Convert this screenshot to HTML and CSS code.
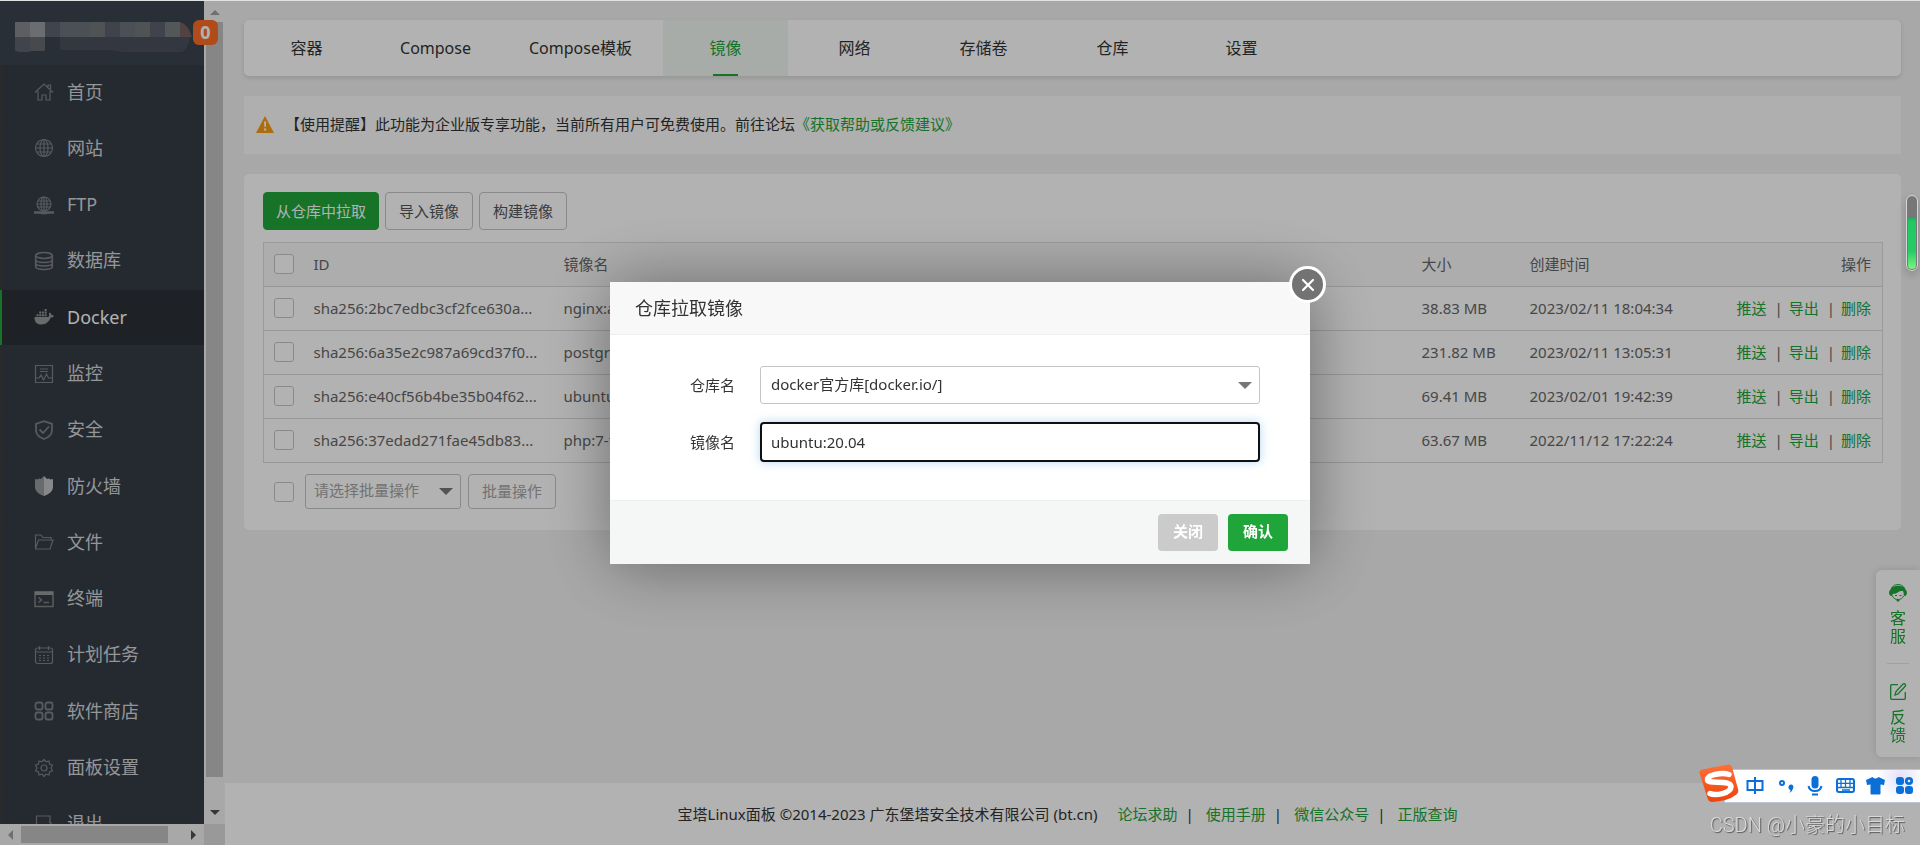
FILE: index.html
```html
<!DOCTYPE html>
<html lang="zh-CN">
<head>
<meta charset="utf-8">
<title>宝塔Linux面板</title>
<link rel="stylesheet" href="styles.css">
</head>
<body>
<div class="app">
  <aside class="side">
    <div class="side-head">
      <svg class="mosaic" width="180" height="30" viewBox="0 0 180 30" aria-hidden="true">
        <path fill="#84878c" d="M0 0h15v15H0z"/><path fill="#9a9da2" d="M15 0h15v15H15z"/>
        <path fill="#5c626d" d="M0 15h15v15H8q-8 0-8-2zM30 0h15v15H30z"/>
        <path fill="#66696f" d="M15 15h15v14H15z"/>
        <path fill="#6c717c" d="M45 0h30v15H45zM105 0h30v15h-30z"/><path fill="#72787a" d="M75 0h15v15H75zM120 0h15v15h-15z"/>
        <path fill="#5c616e" d="M90 0h15v15H90zM135 0h15v15h-15z"/><path fill="#767d82" d="M150 0h15v15h-15z"/>
        <path fill="#785f5f" d="M165 0q8 2 12 15h-12z"/>
        <path fill="#4b505b" d="M45 15h130q-2 12-8 15h-58l-14-2H45z"/>
      </svg>
      <span class="badge">0</span>
    </div>
    <nav class="side-nav">
      <ul class="menu">
        <li><a href="#"><svg viewBox="0 0 20 20"><path d="M1 10.500 10 2l9 8.500M4 9v9h4v-5h4v5h4V9M14 5V3h2.500v4"/></svg>首页</a></li>
        <li><a href="#"><svg viewBox="0 0 20 20"><circle cx="10" cy="10" r="8.500"/><ellipse cx="10" cy="10" rx="4" ry="8.500"/><path d="M10 1.500v17M1.500 10h17M3 6h14M3 14h14"/></svg>网站</a></li>
        <li><a href="#"><svg viewBox="0 0 20 20"><circle cx="10" cy="9" r="7"/><ellipse cx="10" cy="9" rx="3" ry="7"/><path d="M10 2v14M3 9h14M4 6h12M4 12h12"/><path d="M0 17.500h20M7 18h6" stroke-width="2.500"/></svg>FTP</a></li>
        <li><a href="#"><svg viewBox="0 0 20 20"><g stroke-width="1.600"><ellipse cx="10" cy="4.500" rx="8.300" ry="3"/><path d="M1.700 4.500v11c0 4 16.600 4 16.600 0v-11M1.700 8.500c0 4 16.600 4 16.600 0M1.700 12c0 4 16.600 4 16.600 0"/></g></svg>数据库</a></li>
        <li class="on"><a href="#"><svg viewBox="0 0 20 20"><path class="fill" d="M.500 10h13.700c1-.300 1.300-2 .700-3.500l1-.900c1 .700 1.500 1.500 1.600 2.500 1 0 1.800.200 2.500.700-.700 1.400-1.800 1.900-3.300 1.800C15 15 12 17.500 7.500 17.500 3 17.500.200 15 .500 10zM2.500 7.200h2v2.100h-2zM5.200 7.200h2v2.100h-2zM7.900 7.200h2v2.100h-2zM10.600 7.200h2v2.100h-2zM5.200 4.600h2v2h-2zM7.900 4.600h2v2h-2zM10.600 4.600h2v2h-2zM10.600 2h2v2h-2z"/></svg>Docker</a></li>
        <li><a href="#"><svg viewBox="0 0 20 20"><path d="M1.500 1.500h17v17h-17zM6 5h8M6 7.500h8M2 14h3l2-3 2.500 5 3-6 2 4H18"/></svg>监控</a></li>
        <li><a href="#"><svg viewBox="0 0 20 20"><path stroke-width="1.800" d="M10 1.200 18 4v6.500c0 4-4 7-8 8.500-4-1.500-8-4.500-8-8.500V4zM5.500 9.500l3.500 3.500 6-6.500"/></svg>安全</a></li>
        <li><a href="#"><svg viewBox="0 0 20 20"><path class="fill" d="M10 0v20C5 18 1 15.500 1 11V3l2.500.500L5 2.500l2 .500z"/><path class="fill lite" d="M10 0v20c5-2 9-4.500 9-9V3l-2.500.500L15 2.500l-2 .500z"/></svg>防火墙</a></li>
        <li><a href="#"><svg viewBox="0 0 20 20"><path d="M4 17H1.500V3H7l2 2.500h8V8M1.500 16.500 4.500 8H19l-3 9H3"/></svg>文件</a></li>
        <li><a href="#"><svg viewBox="0 0 20 20"><path stroke-width="1.600" d="M1 3h18v14.500H1zM4.500 8.500l3 2.500-3 2.500M9.500 13.500H15"/><path class="fill" d="M1 2.500h18V6H1z"/></svg>终端</a></li>
        <li><a href="#"><svg viewBox="0 0 20 20"><rect x="1.500" y="3" width="17" height="15.500" rx="2"/><path d="M2 7h16M5.500 1v4M14.500 1v4"/><path stroke-dasharray="2 2" d="M5 10.500h10M5 13h10M5 15.500h10"/></svg>计划任务</a></li>
        <li><a href="#"><svg viewBox="0 0 20 20"><g stroke-width="1.800"><rect x="1.500" y="1.500" width="7" height="7" rx="2"/><rect x="11.500" y="1.500" width="7" height="7" rx="2"/><rect x="1.500" y="11.500" width="7" height="7" rx="2"/><rect x="11.500" y="11.500" width="7" height="7" rx="2"/></g></svg>软件商店</a></li>
        <li><a href="#"><svg viewBox="0 0 20 20"><circle cx="10" cy="10" r="3"/><path d="m10 1.500 2 2.400 3-.900.500 3 3 1-1.400 3 1.400 3-3 1-.500 3-3-.900-2 2.400-2-2.400-3 .900-.500-3-3-1 1.400-3-1.400-3 3-1 .500-3 3 .900z"/></svg>面板设置</a></li>
        <li><a href="#"><svg viewBox="0 0 20 20"><path d="M16 8V2H2.500v16H9M8 11h10M15 7.500l3.500 3.500-3.500 3.500"/></svg>退出</a></li>
      </ul>
    </nav>
    <div class="vbar" aria-hidden="true"><i class="tri up"></i><i class="vthumb"></i><i class="tri down"></i></div>
    <div class="hbar" aria-hidden="true"><i class="tri left"></i><i class="hthumb"></i><i class="tri right"></i></div>
    <div class="corner"></div>
  </aside>

  <div class="page">
    <main class="main">
      <nav class="tabs">
        <a href="#">容器</a><a href="#">Compose</a><a href="#">Compose模板</a><a class="on" href="#">镜像</a><a href="#">网络</a><a href="#">存储卷</a><a href="#">仓库</a><a href="#">设置</a>
      </nav>
      <div class="notice">
        <svg width="18" height="17" viewBox="0 0 18 17" aria-hidden="true"><path fill="#fa9d14" d="M9 0l9 17H0z"/><path fill="#fff" d="M8 5.500h2.200l-.4 5.500H8.400zM8 12.500h2.200v2H8z"/></svg>
        <p>【使用提醒】此功能为企业版专享功能，当前所有用户可免费使用。前往论坛<a href="#">《获取帮助或反馈建议》</a></p>
      </div>
      <section class="panel">
        <div class="tools">
          <button class="btn primary" type="button">从仓库中拉取</button>
          <button class="btn" type="button">导入镜像</button>
          <button class="btn" type="button">构建镜像</button>
        </div>
        <table class="list">
          <colgroup><col class="c-check"><col class="c-id"><col><col class="c-size"><col class="c-time"><col class="c-act"></colgroup>
          <thead>
            <tr><th><input type="checkbox" aria-label="全选"></th><th>ID</th><th>镜像名</th><th>大小</th><th>创建时间</th><th class="act">操作</th></tr>
          </thead>
          <tbody>
            <tr><td><input type="checkbox" aria-label="选择"></td><td>sha256:2bc7edbc3cf2fce630a...</td><td>nginx:alpine</td><td>38.83 MB</td><td>2023/02/11 18:04:34</td><td class="act"><a href="#">推送</a><span>|</span><a href="#">导出</a><span>|</span><a href="#">删除</a></td></tr>
            <tr><td><input type="checkbox" aria-label="选择"></td><td>sha256:6a35e2c987a69cd37f0...</td><td>postgres</td><td>231.82 MB</td><td>2023/02/11 13:05:31</td><td class="act"><a href="#">推送</a><span>|</span><a href="#">导出</a><span>|</span><a href="#">删除</a></td></tr>
            <tr><td><input type="checkbox" aria-label="选择"></td><td>sha256:e40cf56b4be35b04f62...</td><td>ubuntu</td><td>69.41 MB</td><td>2023/02/01 19:42:39</td><td class="act"><a href="#">推送</a><span>|</span><a href="#">导出</a><span>|</span><a href="#">删除</a></td></tr>
            <tr><td><input type="checkbox" aria-label="选择"></td><td>sha256:37edad271fae45db83...</td><td>php:7-fpm</td><td>63.67 MB</td><td>2022/11/12 17:22:24</td><td class="act"><a href="#">推送</a><span>|</span><a href="#">导出</a><span>|</span><a href="#">删除</a></td></tr>
          </tbody>
        </table>
        <div class="batch">
          <input type="checkbox" aria-label="全选">
          <select class="pick" aria-label="批量操作"><option>请选择批量操作</option></select>
          <button class="btn muted" type="button">批量操作</button>
        </div>
      </section>
    </main>
    <footer class="foot">
      <span>宝塔Linux面板 ©2014-2023 广东堡塔安全技术有限公司 (bt.cn)</span>
      <span class="links"><a href="#">论坛求助</a><i>|</i><a href="#">使用手册</a><i>|</i><a href="#">微信公众号</a><i>|</i><a href="#">正版查询</a></span>
    </footer>
  </div>
</div>

<div class="service">
  <a href="#"><svg width="18" height="18" viewBox="0 0 18 18"><path fill="currentColor" d="M1.500 5.500C2.500 2.500 6 1.800 9 1.800s6.500.700 7.500 3.700C18.500 7 18.500 11 16 12h-1.300c.300-2 0-3.500-.700-5-2.500 0-4 .500-5 1.200-1.500 1.300-3.500 1.800-5.300 1.600-.200.800-.300 1.500-.300 2.200H2C-.500 11-.500 7 1.500 5.500z"/><path fill="none" stroke="currentColor" d="M2.500 4.500C4 1.200 6.500.600 9 .600s5 .600 6.500 3.900M3.500 12c1 2.500 3 3.500 5.500 3.500s4.500-1 5.500-3.500M6 11.500h2M10.500 11.500h2"/><circle cx="9" cy="16.300" r="1.400" fill="currentColor"/></svg><span>客服</span></a>
  <hr>
  <a href="#"><svg width="18" height="18" viewBox="0 0 18 18" fill="none" stroke="currentColor" stroke-width="1.300"><path d="M9 1.700H2.500q-.800 0-.800.800v13q0 .800.800.800h13q.800 0 .800-.800V9M6 12l1-3.500 7-7.500q1.500-.700 2.300.500.700 1-.300 2L9 11z"/></svg><span>反馈</span></a>
</div>

<div class="shade">
  <div class="dialog" role="dialog" aria-labelledby="dlg-title">
    <button class="close" type="button" aria-label="关闭窗口"><svg width="14" height="14" viewBox="0 0 14 14"><path d="M2 2l10 10M12 2 2 12" stroke="#fff" stroke-width="2.200" stroke-linecap="round"/></svg></button>
    <h2 id="dlg-title">仓库拉取镜像</h2>
    <div class="fields">
      <label for="repo">仓库名</label>
      <select id="repo" class="pick"><option>docker官方库[docker.io/]</option></select>
      <label for="image">镜像名</label>
      <input id="image" type="text" value="ubuntu:20.04">
    </div>
    <div class="actions">
      <button type="button" class="cancel">关闭</button>
      <button type="button" class="ok">确认</button>
    </div>
  </div>
</div>

<div class="gauge" aria-hidden="true"><i></i></div>

<div class="ime">
  <svg class="ime-logo" width="40" height="40" viewBox="0 0 40 40" aria-hidden="true"><defs><linearGradient id="lg" x1="0" y1="0" x2="0" y2="1"><stop offset="0" stop-color="#ff7038"/><stop offset="1" stop-color="#ec430c"/></linearGradient></defs><path fill="url(#lg)" d="M3 5.500 29 .500q3-.500 4 2.500l6 22q1 3-1.500 5.500-9 7-25 7.500-3-.200-3.700-3L.500 9Q0 6 3 5.500z"/><path fill="none" stroke="#fff" stroke-width="5.500" stroke-linecap="round" d="M30 10.500C24 8.500 9 10 8.500 15.500 8 21 31.500 15 32 22.500 32 29.500 16 32 11 29.500"/></svg>
  <svg width="172" height="24" viewBox="0 0 172 24" fill="none" stroke="#0a70d8" stroke-width="2" aria-hidden="true">
    <path d="M2.500 7h15v9h-15zM10 3v17"/>
    <circle cx="37" cy="9" r="2"/><path fill="#0a70d8" stroke="none" d="M43.500 13.500a2.500 2.500 0 1 1 4.500 1q-.500 3-3.500 4.500 1-1.500 1-3-2-.500-2-2.500z"/>
    <rect x="66.500" y="2" width="7" height="12.500" rx="3.500" fill="#0a70d8" stroke="none"/><path d="M63.500 12q1 5 6.500 5t6.500-5M67 20.500h6"/>
    <rect x="92" y="5" width="17" height="13" rx="2"/><path stroke-width="1.300" d="M92 9.300h17M92 13.500h17M96 5v9M100.500 5v9M105 5v9M97 16h8"/>
    <path fill="#0a70d8" stroke="none" d="M121 6l6.500-3q3 3 6 0l6.500 3-1 5-3.500-.500v9q0 1-1 1h-8q-1 0-1-1v-9l-3.500.500z"/>
    <g fill="#0a70d8" stroke="none"><rect x="151" y="3" width="8" height="8" rx="3"/><rect x="151" y="12" width="8" height="8" rx="3"/><rect x="160" y="12" width="8" height="8" rx="3"/></g><circle cx="164" cy="7" r="2.700" stroke-width="2.800"/>
  </svg>
</div>
<div class="watermark">CSDN @小豪的小目标</div>
</body>
</html>
```
FILE: styles.css
```css
* { box-sizing: border-box; }
body {
  margin: 0;
  height: 100vh;
  overflow: hidden;
  border-top: 1px solid #dfe3e3;
  background: #f1f1f1;
  color: #333;
  font: 15px/20px "Noto Sans", "Noto Sans CJK SC", sans-serif;
}
a { color: #20a53a; text-decoration: none; }
button, input, select { font: inherit; color: inherit; margin: 0; }
ul, p, h2 { margin: 0; padding: 0; }

.app { display: grid; grid-template-columns: 225px 1fr; height: 100%; }

/* sidebar */
.side {
  display: grid;
  grid-template-columns: 1fr 21px;
  grid-template-rows: 64px 1fr 21px;
  min-height: 0;
  background: #f1f1f1;
}
.side-head { position: relative; background: #3b444f; padding: 21px 0 0 15px; }
.mosaic { display: block; }
.badge {
  position: absolute;
  z-index: 2;
  right: -14px;
  top: 19px;
  width: 25px;
  height: 25px;
  border-radius: 6px;
  background: #fc6d26;
  color: #fff;
  font-weight: 700;
  font-size: 18px;
  line-height: 24px;
  text-align: center;
}
.side-nav { overflow: hidden; min-height: 0; background: #363d47; }
.menu { display: flex; flex-direction: column; height: 788px; list-style: none; }
.menu li { flex: 1; margin-bottom: 1px; border-left: 2px solid #3c3d3c; }
.menu li.on { border-color: #20a53a; background: #2c3036; }
.menu a {
  display: flex;
  align-items: center;
  gap: 13px;
  height: 100%;
  padding: 0 0 2px 32px;
  color: #d4d7da;
  font-size: 18px;
}
.menu .on a { color: #fff; }
.menu svg { width: 20px; height: 20px; margin-top: 1px; fill: none; stroke: #7e8186; stroke-width: 1.2; }
.menu .fill { fill: #96989b; stroke: none; }
.menu .lite { fill: #c2c3c5; }

.vbar {
  grid-column: 2;
  grid-row: 1 / 3;
  display: flex;
  flex-direction: column;
  align-items: center;
  padding: 9px 0;
}
.vthumb { width: 17px; height: 755px; margin: 7px 0 auto; background: #c1c1c1; }
.hbar { display: flex; align-items: center; padding: 0 8px; }
.hthumb { width: 147px; height: 17px; margin: 0 auto 0 8px; background: #c1c1c1; }
.corner { background: #dcdcdc; }
.tri { border: 5px solid transparent; }
.up { border-top: 0; border-bottom-color: #a0a0a0; }
.down { border-bottom: 0; border-top-color: #505050; }
.left { border-left: 0; border-right-color: #a0a0a0; }
.right { border-right: 0; border-left-color: #505050; }

/* content */
.page { display: flex; flex-direction: column; min-width: 0; }
.main { flex: 1; display: flex; flex-direction: column; gap: 20px; padding: 19px 19px 0; }
.tabs {
  display: flex;
  gap: 4px;
  height: 56px;
  background: #fff;
  border-radius: 5px;
  box-shadow: 0 2px 5px rgba(0, 0, 0, .12);
}
.tabs a {
  display: flex;
  align-items: center;
  justify-content: center;
  min-width: 125px;
  padding: 0 27px;
  color: #333;
  font-size: 16px;
}
.tabs .on {
  color: #20a53a;
  background: linear-gradient(#20a53a, #20a53a) center bottom / 25px 2px no-repeat #f0f7f3;
}
.notice {
  display: flex;
  align-items: center;
  gap: 11px;
  height: 58px;
  padding: 0 12px 2px;
  background: #fbfbfb;
}
.panel { padding: 18px 18px 20px 19px; background: #fff; border-radius: 5px; }
.tools { display: flex; gap: 6px; margin-bottom: 12px; }
.btn {
  height: 38px;
  padding: 0 13px;
  border: 1px solid #c5c5c5;
  border-radius: 4px;
  background: #fff;
  color: #555;
}
.primary { padding: 0 12px; border-color: #20a53a; background: #20a53a; color: #fff; }
.muted { height: 35px; padding: 0 13px 2px; color: #a4a4a4; }

input[type="checkbox"] {
  appearance: none;
  display: block;
  width: 20px;
  height: 20px;
  border: 1px solid #c5c5c5;
  border-radius: 3px;
  background: #fff;
}
.list { width: 100%; table-layout: fixed; border-collapse: collapse; border: 1px solid #ddd; color: #666; }
.c-check { width: 38px; }
.c-id { width: 250px; }
.c-size { width: 108px; }
.c-time { width: 170px; }
.c-act { width: 195px; }
.list tr { height: 44px; border-bottom: 1px solid #dadada; }
.list th, .list td { padding: 0 11px 2px 12px; font-weight: 400; text-align: left; white-space: nowrap; }
.list th:first-child, .list td:first-child { padding-left: 10px; }
.list thead { background: #f8f8f8; }
.list .act { text-align: right; }
.act span { margin: 0 6px 0 8px; }
.batch { display: flex; align-items: center; padding: 11px 0 1px 11px; }
.pick {
  appearance: none;
  border: 1px solid #c5c5c5;
  border-radius: 3px;
  padding: 0 24px 3px 9px;
  background: #fff url("data:image/svg+xml,%3Csvg xmlns='http://www.w3.org/2000/svg' width='14' height='7'%3E%3Cpath d='M0 0h14L7 7z' fill='%23777'/%3E%3C/svg%3E") right 7px center no-repeat;
}
.batch .pick { width: 156px; height: 35px; margin: 0 7px 0 11px; padding-left: 8px; color: #a4a4a4; }

.foot {
  display: flex;
  align-items: center;
  justify-content: center;
  gap: 20px;
  height: 62px;
  padding-right: 10px;
  background: #fff;
}
.links i { margin: 0 12px 0 8px; font-style: normal; }

/* floating help box */
.service {
  position: fixed;
  right: 0;
  top: 570px;
  width: 44px;
  padding: 14px 11px 13px;
  border-radius: 6px 0 0 6px;
  background: #fff;
  box-shadow: 0 0 8px rgba(0, 0, 0, .15);
}
.service a { display: flex; flex-direction: column; align-items: center; gap: 7px; }
.service span { width: 16px; font-size: 16px; line-height: 18px; }
.service hr { margin: 18px 0 19px; border: 0; border-top: 1px solid #e6e6e6; }

/* dialog */
.shade {
  position: fixed;
  inset: 1px 0 0;
  z-index: 5;
  display: flex;
  align-items: center;
  justify-content: center;
  background: rgba(0, 0, 0, .3);
}
.dialog { position: relative; width: 700px; background: #fff; box-shadow: 1px 1px 62px rgba(0, 0, 0, .4); }
.dialog h2 {
  padding: 16px 25px;
  border-bottom: 1px solid #eee;
  background: #f8f8f8;
  font-size: 18px;
  font-weight: 400;
}
.close {
  position: absolute;
  right: -16px;
  top: -16px;
  display: grid;
  place-items: center;
  width: 37px;
  height: 37px;
  padding: 0;
  border: 3px solid #fff;
  border-radius: 50%;
  background: #737373;
}
.fields {
  display: grid;
  grid-template-columns: 100px 500px;
  gap: 18px 25px;
  align-items: center;
  padding: 31px 25px 38px;
}
.fields label { text-align: right; }
.fields .pick { height: 38px; padding-left: 10px; }
.fields input {
  height: 40px;
  padding: 0 9px;
  border: 2px solid #101010;
  border-radius: 4px;
  outline: 0;
  box-shadow: 0 0 10px rgba(102, 175, 233, .5);
}
.actions {
  display: flex;
  justify-content: flex-end;
  gap: 10px;
  padding: 13px 22px;
  border-top: 1px solid #edefef;
  background: #f5f7f7;
}
.actions button { width: 60px; height: 37px; padding: 0 0 3px; border: 0; border-radius: 4px; color: #fff; font-weight: 700; }
.actions .cancel { background: #cbcbcb; }
.actions .ok { background: #20a53a; }

/* desktop overlays */
.gauge {
  position: fixed;
  z-index: 6;
  right: 2px;
  top: 195px;
  width: 12px;
  height: 76px;
  padding: 1px;
  border: 1px solid #d5d5d5;
  border-radius: 6px;
  background: #777;
  box-shadow: 0 4px 10px rgba(0, 0, 0, .2);
}
.gauge i { display: block; height: 51px; margin-top: 21px; border-radius: 2px 2px 5px 5px; background: linear-gradient(#13b858, #20c964 8%, #26cc66 65%, #7bf57b); }
.ime {
  position: fixed;
  z-index: 6;
  right: 0;
  top: 769px;
  display: flex;
  align-items: center;
  height: 34px;
  padding: 0 3px 0 20px;
  border: 1px solid #b8c6d8;
  border-right: 0;
  background: radial-gradient(circle at 90% 20%, #e4e0fa, transparent 24px), #fff;
  background-clip: padding-box;
}
.ime-logo { position: absolute; left: -26px; top: -6px; }
.watermark {
  position: fixed;
  z-index: 6;
  right: 15px;
  top: 811px;
  color: #d9d9d9;
  font: 300 20px/28px Roboto, "Noto Sans CJK SC", sans-serif;
  text-shadow: 1px 1px 1px #555;
}
```
